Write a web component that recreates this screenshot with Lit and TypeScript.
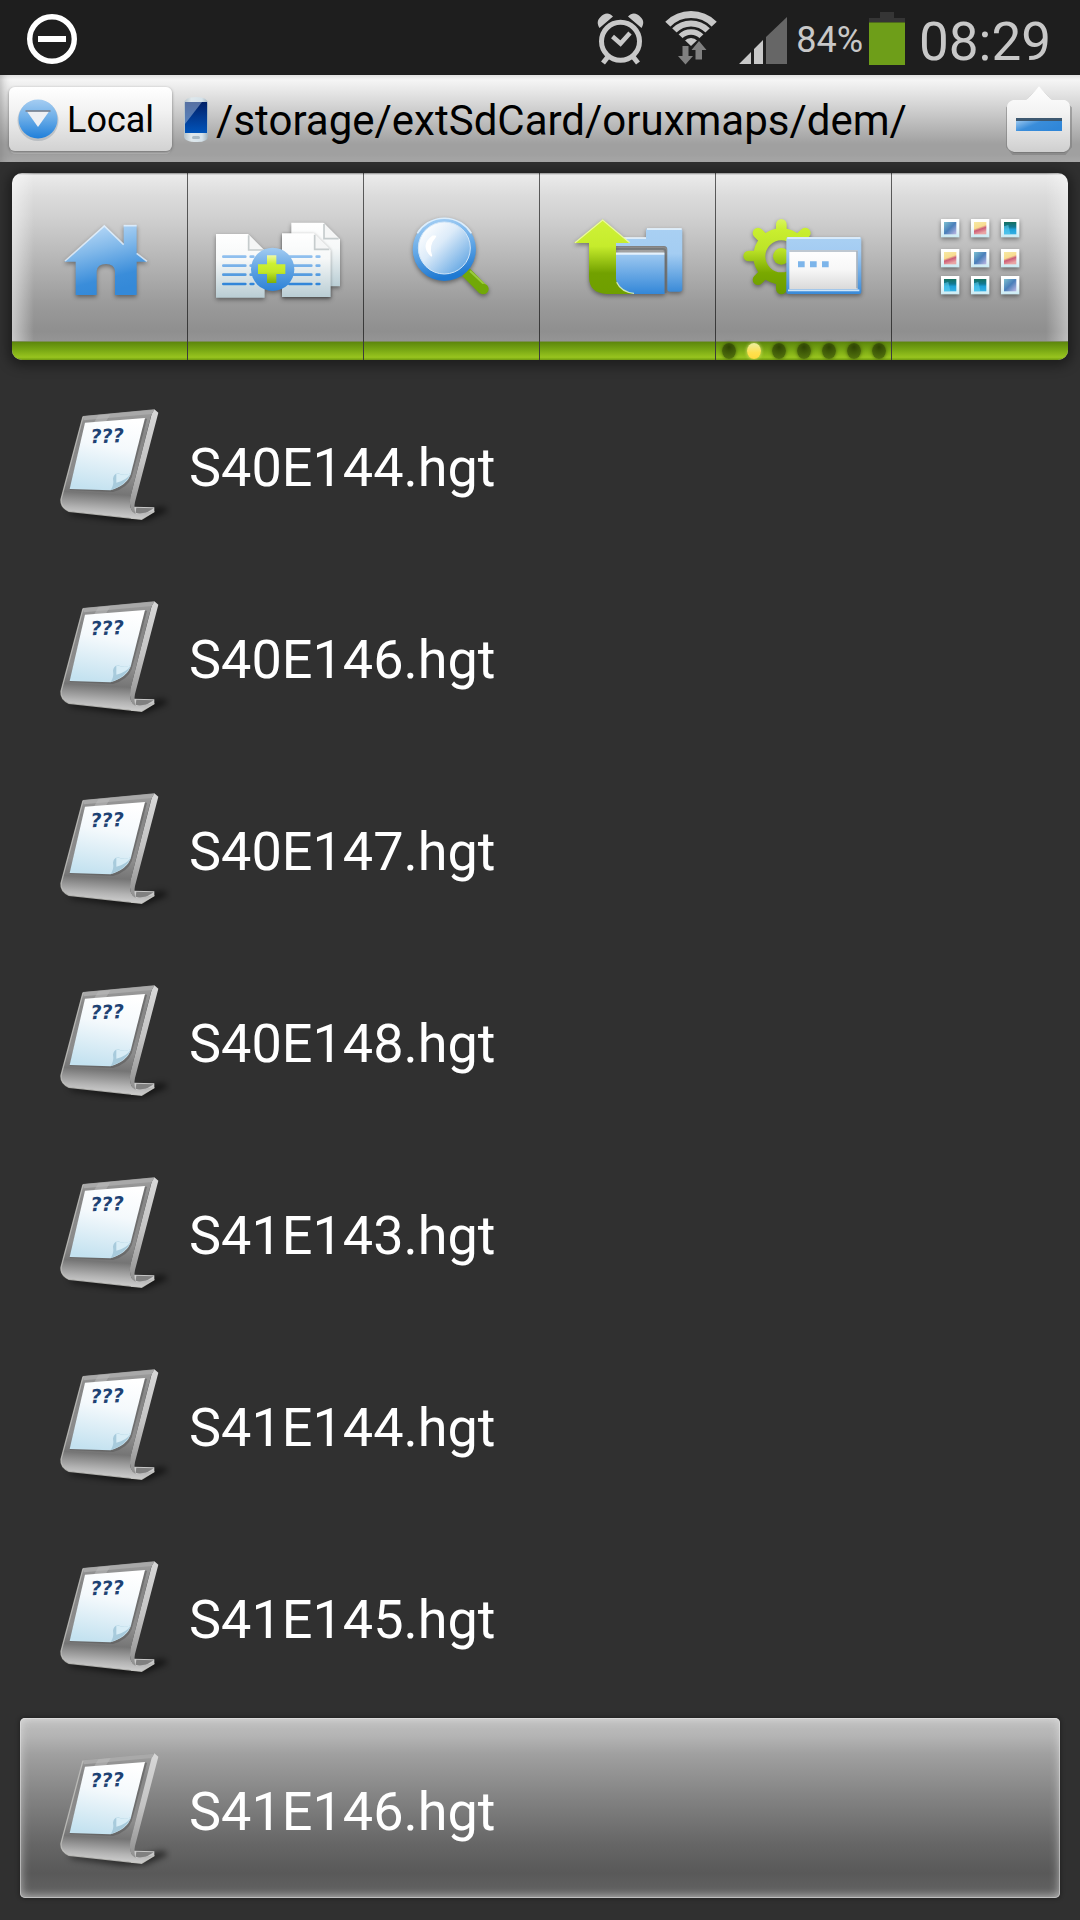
import { LitElement, html, css, svg } from "lit";
import { customElement, property, state } from "lit/decorators.js";
import { classMap } from "lit/directives/class-map.js";

/* ---------- status bar ---------- */

@customElement("status-bar")
class StatusBar extends LitElement {
  static styles = css`
    :host {
      display: block;
      background: #1e1e1e;
      color: #c8c8c8;
    }
    .bar {
      display: flex;
      align-items: center;
      gap: 6px;
      height: 75px;
      padding: 0 29px 0 24px;
    }
    .bar svg {
      display: block;
      flex: none;
    }
    .spacer {
      flex: 1;
    }
    .percent {
      font-size: 36px;
      line-height: 40px;
      padding-top: 4px;
    }
    .clock {
      font-size: 53px;
      line-height: 64px;
      margin-left: 8px;
      padding-top: 8px;
    }
  `;

  render() {
    return html`
      <div class="bar">
        <svg width="56" height="60" viewBox="24 8 56 60" role="img" aria-label="Blocking mode">
          <circle cx="52" cy="39" r="22.3" fill="none" stroke="#fff" stroke-width="5.4" />
          <rect x="38" y="36" width="28" height="6" fill="#fff" />
        </svg>
        <span class="spacer"></span>
        <svg width="56" height="60" viewBox="592 8 56 60" role="img" aria-label="Alarm set">
          <g fill="none" stroke="#c8c8c8">
            <circle cx="618.5" cy="41.3" r="19" stroke-width="5" />
            <path d="M610.5 36.500 L618.5 43.500 L628 33" stroke-width="4.500" />
            <path d="M606.500 56 L601 63 M630.500 56 L636 63" stroke-width="5" />
          </g>
          <path d="M597.5 28 L611 16.500 C607 12 602 13 598.500 17 C595 20 595 24 597.500 28 Z M639.500 28 L626 16.500 C630 12 635 13 638.500 17 C642 20 642 24 639.500 28 Z" fill="#c8c8c8" />
        </svg>
        <svg width="70" height="60" viewBox="654 8 70 60" role="img" aria-label="Wi-Fi">
          <defs>
            <clipPath id="fan"><path d="M689 46 L655 14 L655 0 L723 0 L723 14 Z" /></clipPath>
          </defs>
          <g clip-path="url(#fan)" fill="none" stroke="#c8c8c8">
            <circle cx="689" cy="47" r="32.500" stroke-width="7" />
            <circle cx="689" cy="47" r="23.500" stroke-width="6" />
            <circle cx="689" cy="47" r="15" stroke-width="5.500" />
            <circle cx="689" cy="47" r="4.500" stroke-width="9" />
          </g>
          <g fill="#808080" stroke="#1e1e1e" stroke-width="1" paint-order="stroke">
            <path d="M680.500 46 H686.500 V56 H691 L683.500 64.500 L676 56 H680.500 Z" />
            <path d="M693.500 59.500 H700 V50 H704.500 L697 41 L689.500 50 H693.500 Z" />
          </g>
        </svg>
        <svg width="58" height="60" viewBox="730 8 58 60" role="img" aria-label="Mobile signal">
          <path d="M737 64 L749 52 V64 Z M752 49 L761 40 V64 H752 Z" fill="#c8c8c8" />
          <path d="M764 37 L785 17 V64 H764 Z" fill="#666" />
        </svg>
        <span class="percent">84%</span>
        <svg width="36" height="60" viewBox="867 8 36 60" role="img" aria-label="Battery">
          <path d="M878 12 H892 V18 H903 V23 H867 V18 H878 Z" fill="#353535" />
          <rect x="867" y="22" width="36" height="43" fill="#6e9e19" />
          <rect x="867" y="22" width="36" height="1" fill="#4d6a1c" />
        </svg>
        <span class="clock">08:29</span>
      </div>
    `;
  }
}

/* ---------- path bar ---------- */

@customElement("path-bar")
class PathBar extends LitElement {
  static styles = css`
    :host {
      display: block;
    }
    .bar {
      display: flex;
      align-items: center;
      height: 87px;
      box-sizing: border-box;
      padding: 0 6px 0 9px;
      color: #000;
      background: linear-gradient(#e2e2e2 0, #f5f5f5 5px, #ececec 12px, #d2d2d2 32px, #bababa 50px, #a0a0a0 69px, #a0a0a0 80px, #a8a8a8 87px);
      box-shadow: inset 10px 0 8px -8px rgba(120, 120, 120, 0.5);
    }
    button {
      font: inherit;
      color: inherit;
      border: 0;
      padding: 0;
      background: none;
    }
    .local {
      display: flex;
      align-items: center;
      gap: 8px;
      height: 64px;
      flex: none;
      padding: 2px 18px 0 8px;
      border-radius: 6px;
      background: linear-gradient(#fff, #f3f3f3 35%, #d2d2d2);
      box-shadow: 0 1px 3px rgba(60, 60, 60, 0.6), 0 4px 0 -1px rgba(200, 200, 200, 0.5);
      font-size: 36px;
      line-height: 40px;
    }
    .local svg,
    .phone,
    .toggle svg {
      display: block;
      flex: none;
    }
    .phone {
      margin-left: 9px;
    }
    .path {
      flex: 1;
      min-width: 0;
      overflow: hidden;
      white-space: nowrap;
      margin-left: 5px;
      font-size: 42px;
      line-height: 56px;
      padding-top: 4px;
    }
    .toggle {
      flex: none;
    }
  `;

  render() {
    return html`
      <div class="bar">
        <button class="local">
          <svg width="42" height="44" viewBox="0 0 42 44" aria-hidden="true">
            <defs>
              <linearGradient id="ball" x2="0" y2="1">
                <stop offset="0" stop-color="#a5cdf2" />
                <stop offset="0.45" stop-color="#6fafe8" />
                <stop offset="1" stop-color="#1f7fda" />
              </linearGradient>
            </defs>
            <circle cx="21" cy="22.500" r="20.500" fill="#7d8a96" opacity="0.35" />
            <circle cx="21" cy="21" r="19.500" fill="url(#ball)" />
            <path d="M10 13.500 H32 L21 29 Z" fill="#eef0f4" />
            <path d="M8.500 13 H33.500" stroke="#77777f" stroke-width="2" opacity="0.7" />
          </svg>
          Local
        </button>
        <svg class="phone" width="30" height="50" viewBox="181 94 30 50" role="img" aria-label="Device storage">
          <defs>
            <linearGradient id="shell">
              <stop offset="0" stop-color="#b4c2ca" />
              <stop offset="0.3" stop-color="#dfe8ec" />
              <stop offset="0.75" stop-color="#d5e2ea" />
              <stop offset="1" stop-color="#a2b2bc" />
            </linearGradient>
            <linearGradient id="glass" x2="0" y2="1">
              <stop offset="0" stop-color="#001f66" />
              <stop offset="0.5" stop-color="#023a92" />
              <stop offset="1" stop-color="#0054ba" />
            </linearGradient>
          </defs>
          <path d="M184 104 Q184 97 196 97 Q208 97 208 104 V136 Q208 142 197 142 Q184 142 184 136 Z" fill="url(#shell)" />
          <rect x="185" y="102" width="22" height="31" fill="url(#glass)" />
          <path d="M185 102 H202 L185 124 Z" fill="#9fb4d4" opacity="0.55" />
          <rect x="192" y="136" width="8" height="3" rx="1.500" fill="#a9bac4" />
        </svg>
        <span class="path">/storage/extSdCard/oruxmaps/dem/</span>
        <button class="toggle" aria-label="Collapse toolbar">
          <svg width="70" height="76" viewBox="1005 80 70 76" aria-hidden="true">
            <defs>
              <linearGradient id="tab" x2="0" y2="1">
                <stop offset="0" stop-color="#fff" />
                <stop offset="0.4" stop-color="#f3f3f3" />
                <stop offset="1" stop-color="#cfcfcf" />
              </linearGradient>
              <linearGradient id="dash" x2="1" y2="0.600">
                <stop offset="0" stop-color="#a9d0f3" />
                <stop offset="0.5" stop-color="#3a8dda" />
                <stop offset="1" stop-color="#2f86d8" />
              </linearGradient>
            </defs>
            <path d="M1014 101 H1027 L1040 87 L1053 101 H1066 L1072 107 V146 L1066 153 H1014 L1008 146 V107 Z" fill="#555" stroke="#777" stroke-width="2" opacity="0.500" />
            <path d="M1014 99 H1027 Q1029 98 1040 85 Q1051 98 1053 99 H1066 Q1071 101 1071 106 V144 Q1071 149 1065 151 H1015 Q1008 149 1008 144 V106 Q1008 101 1014 99 Z" fill="url(#tab)" />
            <rect x="1017" y="118" width="46" height="12" fill="url(#dash)" />
            <rect x="1017" y="117" width="46" height="3" fill="#3d5870" />
          </svg>
        </button>
      </div>
    `;
  }
}

/* ---------- toolbar ---------- */

const homeIcon = html`
  <svg viewBox="84 141 432 288" aria-hidden="true">
    <defs>
      <linearGradient id="home" gradientUnits="userSpaceOnUse" x1="260" y1="190" x2="310" y2="385">
        <stop offset="0" stop-color="#b5d7f6" />
        <stop offset="0.35" stop-color="#82b9ea" />
        <stop offset="0.8" stop-color="#3a8dda" />
        <stop offset="1" stop-color="#3489d8" />
      </linearGradient>
    </defs>
    <path d="M193 290 L313 181 L371 238 V180 H410 V264 L442 290 H410 V390 H345 V318 Q343 297 318 297 Q292 297 290 318 V390 H227 V290 Z" fill="url(#home)" />
    <path d="M195 288 L313 183 L371 239 M371 182 H410 M410 265 L441 289" fill="none" stroke="#eef6fd" stroke-width="5" opacity="0.75" />
  </svg>
`;

const sheet = (x: number, y: number) => svg`
  <g transform="translate(${x} ${y})">
    <path d="M0 0 H96 L146 50 V191 H0 Z" fill="url(#paper)" />
    <path d="M98 2 V48 H144 Z" fill="#f5f6f6" />
    <path d="M98 4 V48 H142" fill="none" stroke="#b9c0c2" stroke-width="5" opacity="0.8" />
  </g>`;
const rules = (x: number, y: number) => svg`
  <g transform="translate(${x} ${y})" stroke-width="8" stroke-linecap="round" fill="none">
    <path d="M22 68 H88 M104 68 H112" stroke="#8fbfee" />
    <path d="M22 95 H88 M104 95 H112" stroke="#78b1e9" />
    <path d="M22 122 H88 M104 122 H112" stroke="#559ce0" />
    <path d="M22 150 H88 M104 150 H112" stroke="#3286d9" />
  </g>`;

const copyIcon = html`
  <svg viewBox="612 141 432 288" aria-hidden="true">
    <defs>
      <linearGradient id="paper" x2="0" y2="1">
        <stop offset="0" stop-color="#fff" />
        <stop offset="0.4" stop-color="#f6f8f8" />
        <stop offset="1" stop-color="#b9cdd4" />
      </linearGradient>
      <linearGradient id="disc" x2="0" y2="1">
        <stop offset="0" stop-color="#a3ccf2" />
        <stop offset="0.55" stop-color="#5a9fe1" />
        <stop offset="1" stop-color="#2c82d7" />
      </linearGradient>
      <linearGradient id="plus" x2="0" y2="1">
        <stop offset="0" stop-color="#eef8a8" />
        <stop offset="0.3" stop-color="#cdf032" />
        <stop offset="0.6" stop-color="#c2e829" />
        <stop offset="1" stop-color="#7fae08" />
      </linearGradient>
    </defs>
    ${sheet(874, 173)} ${sheet(648, 207)}
    <g filter="drop-shadow(0 2px 4px rgba(0,0,0,.35))">${sheet(846, 205)}</g>
    ${rules(648, 207)} ${rules(846, 207)}
    <circle cx="818" cy="313" r="65" fill="url(#disc)" />
    <path d="M801 271 H829 V298 H856 V327 H829 V354 H801 V327 H774 V298 H801 Z" fill="url(#plus)" />
  </svg>
`;

const searchIcon = html`
  <svg viewBox="60 141 432 288" aria-hidden="true">
    <defs>
      <linearGradient id="rim" x2="0.2" y2="1">
        <stop offset="0" stop-color="#add4f6" />
        <stop offset="0.5" stop-color="#6aace8" />
        <stop offset="1" stop-color="#1f79d2" />
      </linearGradient>
      <linearGradient id="lens" x1="0.1" y1="0.1" x2="0.9" y2="0.9">
        <stop offset="0" stop-color="#fff" />
        <stop offset="0.4" stop-color="#dcebf9" />
        <stop offset="1" stop-color="#62a6e3" />
      </linearGradient>
    </defs>
    <path d="M318 322 L370 374" stroke="#71a808" stroke-width="32" />
    <path d="M330 318 L379 364" stroke="#9aca3e" stroke-width="6" />
    <circle cx="370" cy="372" r="16" fill="#71a808" />
    <circle cx="253" cy="253" r="95" fill="url(#rim)" />
    <path d="M172 205 A95 95 0 0 1 334 205" fill="none" stroke="#dcedfb" stroke-width="5" />
    <circle cx="253" cy="249" r="78" fill="url(#lens)" stroke="#d2e6f8" stroke-width="3" />
    <path d="M218 214 Q182 242 214 272 Q202 242 226 214 Z" fill="#fff" stroke="#fff" stroke-width="5" stroke-linejoin="round" />
  </svg>
`;

const folderIcon = html`
  <svg viewBox="588 141 432 288" aria-hidden="true">
    <defs>
      <linearGradient id="arrow" x2="0" y2="1">
        <stop offset="0" stop-color="#cff238" />
        <stop offset="0.36" stop-color="#c6ec2c" />
        <stop offset="0.72" stop-color="#72a100" />
        <stop offset="1" stop-color="#6f9f00" />
      </linearGradient>
      <linearGradient id="back" x2="0" y2="1">
        <stop offset="0" stop-color="#a9d0f3" />
        <stop offset="0.4" stop-color="#a4cdf2" />
        <stop offset="1" stop-color="#3b8bd8" />
      </linearGradient>
      <linearGradient id="front" x2="0" y2="1">
        <stop offset="0" stop-color="#a0caf1" />
        <stop offset="1" stop-color="#3387d8" />
      </linearGradient>
    </defs>
    <path d="M745 218 H858 V196 Q858 190 864 190 H962 Q967 190 967 196 V372 Q967 380 958 380 H930 Q922 380 922 372 V254 Q922 243 912 243 H745 Z" fill="url(#back)" />
    <path d="M746 219 H858 M861 192 H965" stroke="#eef6fd" stroke-width="5" />
    <path d="M766 264 H914 V387 H800 Q766 384 766 345 Z" fill="url(#front)" />
    <path d="M768 266 H913" stroke="#e4f1fc" stroke-width="7" />
    <path d="M768 252 H908 Q917 252 917 262 V384" fill="none" stroke="#5f6468" stroke-width="6" opacity="0.6" />
    <path d="M728 163 L811 234 H768 V342 Q772 378 822 387 H740 Q687 384 687 336 V234 H642 Z" fill="url(#arrow)" />
    <path d="M645 233 L728 165 L809 233 M770 352 Q784 382 822 385" fill="none" stroke="#f0fab8" stroke-width="4" opacity="0.8" />
  </svg>
`;

const settingsIcon = html`
  <svg viewBox="66 141 432 288" aria-hidden="true">
    <defs>
      <linearGradient id="gear" gradientUnits="userSpaceOnUse" x1="0" y1="165" x2="0" y2="385">
        <stop offset="0" stop-color="#d8f45e" />
        <stop offset="0.12" stop-color="#caef30" />
        <stop offset="0.4" stop-color="#bde428" />
        <stop offset="0.72" stop-color="#79a900" />
        <stop offset="1" stop-color="#6b9c00" />
      </linearGradient>
      <linearGradient id="frame" x2="0" y2="1">
        <stop offset="0" stop-color="#a9d0f3" />
        <stop offset="0.25" stop-color="#a4ccf2" />
        <stop offset="1" stop-color="#3a8ad8" />
      </linearGradient>
      <linearGradient id="pane" x2="0" y2="1">
        <stop offset="0" stop-color="#fff" />
        <stop offset="0.5" stop-color="#f7f7f7" />
        <stop offset="1" stop-color="#d9d9d9" />
      </linearGradient>
    </defs>
    <g fill="none" stroke="url(#gear)">
      <circle cx="214" cy="274" r="66" stroke-width="36" />
      <path d="M214 200 V178 M214 348 V372 M140 273 H116 M162 222 L144 204 M162 326 L144 344 M266 222 L286 204" stroke-width="32" stroke-linecap="round" />
    </g>
    <circle cx="214" cy="274" r="25" fill="url(#gear)" />
    <rect x="229" y="216" width="225" height="171" rx="6" fill="url(#frame)" />
    <path d="M232 219 H451" stroke="#e8f3fd" stroke-width="5" />
    <rect x="238" y="255" width="205" height="118" fill="url(#pane)" />
    <path d="M238 258 H443 M441 256 V370" fill="none" stroke="#8496a6" stroke-width="5" opacity="0.7" />
    <path d="M234 376 H448" stroke="#cfe5f9" stroke-width="5" />
    <path d="M264 289 H284 V307 H264 Z M300 289 H320 V307 H300 Z M336 289 H356 V307 H336 Z" fill="#7db5ea" />
  </svg>
`;

const thumbs: Array<[number, number, string]> = [
  [693, 162, "sea"], [783, 162, "sun"], [873, 162, "reef"],
  [693, 252, "sun"], [783, 252, "sea"], [873, 252, "sun"],
  [693, 333, "reef"], [783, 333, "reef"], [873, 333, "sea"],
];

const appsIcon = html`
  <svg viewBox="594 141 432 288" aria-hidden="true">
    <defs>
      <linearGradient id="card" x2="0" y2="1">
        <stop offset="0" stop-color="#fff" />
        <stop offset="0.4" stop-color="#fafdfe" />
        <stop offset="1" stop-color="#c9eaf3" />
      </linearGradient>
      <linearGradient id="sea" x2="1" y2="1">
        <stop offset="0" stop-color="#7cc0d0" />
        <stop offset="0.5" stop-color="#4a7fba" />
        <stop offset="1" stop-color="#c0b8e4" />
      </linearGradient>
      <linearGradient id="sun" x2="0.35" y2="1">
        <stop offset="0" stop-color="#f6e9a4" />
        <stop offset="0.5" stop-color="#f8dc90" />
        <stop offset="0.68" stop-color="#cc5d78" />
        <stop offset="1" stop-color="#e9a5a4" />
      </linearGradient>
      <linearGradient id="reef" x2="0" y2="1">
        <stop offset="0" stop-color="#14705f" />
        <stop offset="0.4" stop-color="#127a96" />
        <stop offset="0.6" stop-color="#1da0d8" />
        <stop offset="1" stop-color="#35b0e4" />
      </linearGradient>
    </defs>
    ${thumbs.map(
      ([x, y, fill]) => svg`
        <rect x=${x} y=${y} width="55" height="55" fill="url(#card)" />
        <rect x=${x + 9} y=${y + 9} width="37" height="37" fill="url(#${fill})" />
        ${fill === "reef"
          ? svg`<path d="M${x + 9} ${y + 22} L${x + 22} ${y + 18} L${x + 28} ${y + 46} H${x + 9} Z" fill="#63d3f2" opacity="0.55" />`
          : ""}`
    )}
  </svg>
`;

const tools = [
  { label: "Home", icon: homeIcon },
  { label: "Multi select", icon: copyIcon },
  { label: "Search", icon: searchIcon },
  { label: "Up one level", icon: folderIcon },
  { label: "Window settings", icon: settingsIcon, pages: 7, current: 1 },
  { label: "View as icons", icon: appsIcon },
];

@customElement("tool-bar")
class ToolBar extends LitElement {
  static styles = css`
    :host {
      display: block;
      padding: 11px 12px 10px;
    }
    .tools {
      display: grid;
      grid-template-columns: repeat(6, minmax(0, 1fr));
      border-radius: 10px;
      overflow: hidden;
      height: 187px;
      background:
        linear-gradient(90deg, rgba(255, 255, 255, 0.5), transparent 22px, transparent calc(100% - 22px), rgba(255, 255, 255, 0.4)),
        linear-gradient(#8a8a8a 0, #ebebeb 2px, #dcdcdc 22px, #d3d3d3 40px, #b4b4b4 90px, #9a9a9a 132px, #8f8f8f 158px, #959595 169px);
      box-shadow: 0 2px 12px 4px rgba(0, 0, 0, 0.4);
    }
    .tool {
      display: flex;
      flex-direction: column;
      align-items: center;
      justify-content: space-between;
      border: 0;
      border-right: 1px solid rgba(0, 0, 0, 0.6);
      padding: 39px 0 0;
      background: none;
    }
    .tool:last-child {
      border-right: 0;
    }
    .tool svg {
      display: block;
      width: 144px;
      height: 96px;
      flex: none;
      filter: drop-shadow(0 2px 2px rgba(0, 0, 0, 0.4));
    }
    .strip {
      display: flex;
      justify-content: space-around;
      align-items: center;
      align-self: stretch;
      height: 18px;
      background: linear-gradient(#5d870c, #79a814 45%, #98c41f 85%, #6f9a10);
      border-top: 1px solid #7b8c57;
    }
    .dot {
      width: 14px;
      height: 16px;
      border-radius: 50%;
      background: radial-gradient(circle at 50% 25%, #2e4403, #50700c 80%);
      box-shadow: 0 0 3px 1px rgba(60, 84, 6, 0.5);
    }
    .dot.on {
      background: linear-gradient(#ecefa0, #ffe04e 60%, #ffd93c);
      box-shadow: 0 0 3px 1px rgba(240, 240, 130, 0.5);
    }
  `;

  render() {
    return html`
      <nav class="tools" aria-label="File tools">
        ${tools.map(
          (t) => html`
            <button class="tool" aria-label=${t.label}>
              ${t.icon}
              <span class="strip">
                ${Array.from(
                  { length: t.pages ?? 0 },
                  (_, i) => html`<span class=${classMap({ dot: true, on: i === t.current })}></span>`
                )}
              </span>
            </button>
          `
        )}
      </nav>
    `;
  }
}

/* ---------- file list ---------- */

@customElement("file-row")
class FileRow extends LitElement {
  @property() name = "";
  @property({ type: Boolean }) selected = false;

  static styles = css`
    :host {
      display: block;
      padding: 4px 20px 8px;
    }
    .row {
      display: flex;
      align-items: center;
      gap: 17px;
      width: 100%;
      height: 180px;
      box-sizing: border-box;
      border: 0;
      border-radius: 5px;
      padding: 4px 38px 0;
      background: none;
      color: #fff;
      font: inherit;
      font-size: 54px;
      line-height: 64px;
      text-align: left;
    }
    .row.selected {
      background: linear-gradient(#c0c0c0, #b4b4b4 10%, #a0a0a0 20%, #848484 43%, #666 70%, #595959 86%, #606060 95%, #707070);
      box-shadow:
        inset 0 0 0 1px rgba(235, 235, 235, 0.45),
        inset 0 0 10px 1px rgba(235, 235, 235, 0.6),
        0 0 4px 1px rgba(0, 0, 0, 0.3);
    }
    .icon {
      display: block;
      width: 114px;
      height: 120px;
      flex: none;
    }
    .marks {
      font: italic 900 58px "DejaVu Sans", "Open Sans", sans-serif;
    }
    .name {
      padding-top: 4px;
    }
  `;

  render() {
    return html`
      <button class=${classMap({ row: true, selected: this.selected })}>
        <svg class="icon" viewBox="57 48 342 360" aria-hidden="true">
          <defs>
            <linearGradient id="frame" gradientUnits="userSpaceOnUse" x1="200" y1="60" x2="180" y2="390">
              <stop offset="0" stop-color="#9c9c9c" />
              <stop offset="0.2" stop-color="#868686" />
              <stop offset="0.6" stop-color="#8c8c8c" />
              <stop offset="0.76" stop-color="#757575" />
              <stop offset="0.9" stop-color="#b4b4b4" />
              <stop offset="1" stop-color="#d8d8d8" />
            </linearGradient>
            <linearGradient id="edge" x2="0" y2="1">
              <stop offset="0" stop-color="#d8d8d8" />
              <stop offset="0.5" stop-color="#c4c4c4" />
              <stop offset="1" stop-color="#8f8f8f" />
            </linearGradient>
            <linearGradient id="page" x1="0.6" x2="0.4" y2="1">
              <stop offset="0" stop-color="#fff" />
              <stop offset="0.4" stop-color="#f4f9fc" />
              <stop offset="1" stop-color="#c4e2f0" />
            </linearGradient>
            <filter id="soft" x="-20%" y="-80%" width="140%" height="260%"><feGaussianBlur stdDeviation="9" /></filter>
          </defs>
          <path d="M85 362 L290 368 L372 350 L388 362 L318 392 L250 394 L100 374 Z" fill="#000" opacity="0.6" filter="url(#soft)" />
          <path d="M284 350 L346 352 V366 L308 388 L276 386 Z" fill="#c9c9c9" />
          <path d="M292 353 L344 355 L312 374 L290 368 Z" fill="#808080" />
          <path d="M132 78 L346 58 L338 70 L274 322 Q268 362 292 372 L346 364 L308 388 L90 364 Q64 352 66 328 Z" fill="url(#frame)" />
          <path d="M346 58 L358 68 L288 336 Q284 356 290 372 Q268 362 274 322 L338 72 Z" fill="url(#edge)" />
          <path d="M132 79 L346 59 L338 72 L134 91 Z" fill="#a9a9a9" />
          <path d="M178 76 L215 72 L200 96 L166 96 Z" fill="#bcbcbc" opacity="0.5" />
          <path d="M132 80 L66 328 Q64 352 90 364 L308 388 L346 364" fill="none" stroke="#c6c6c2" stroke-width="4" opacity="0.8" />
          <path d="M139 101 L324 86 L278 262 Q266 294 222 306 L92 300 Z" fill="#5c5c5c" opacity="0.6" />
          <path d="M138 98 L318 84 L276 250 Q266 286 214 301 L92 297 Z" fill="url(#page)" />
          <path d="M276 250 Q262 286 214 301 Q226 285 222 266 Q224 252 236 250 Q258 258 276 250 Z" fill="#a8cbdc" />
          <path d="M232 250 Q256 258 276 250 Q262 272 232 278 Z" fill="#d8edf6" />
          <text class="marks" x="155" y="160" fill="#1e4274" transform="rotate(-2 155 160)">???</text>
        </svg>
        <span class="name">${this.name}</span>
      </button>
    `;
  }
}

@customElement("app-root")
class AppRoot extends LitElement {
  @state() private selected = "S41E146.hgt";

  private files = [
    "S40E144.hgt",
    "S40E146.hgt",
    "S40E147.hgt",
    "S40E148.hgt",
    "S41E143.hgt",
    "S41E144.hgt",
    "S41E145.hgt",
    "S41E146.hgt",
  ];

  static styles = css`
    :host {
      display: block;
      min-height: 100vh;
      background: #303030;
      font-family: Roboto, "Liberation Sans", sans-serif;
    }
    .files {
      list-style: none;
      margin: 0;
      padding: 0 0 13px;
    }
  `;

  render() {
    return html`
      <status-bar></status-bar>
      <path-bar></path-bar>
      <tool-bar></tool-bar>
      <ul class="files">
        ${this.files.map(
          (name) => html`
            <li>
              <file-row
                .name=${name}
                .selected=${name === this.selected}
                @click=${() => (this.selected = name)}
              ></file-row>
            </li>
          `
        )}
      </ul>
    `;
  }
}
